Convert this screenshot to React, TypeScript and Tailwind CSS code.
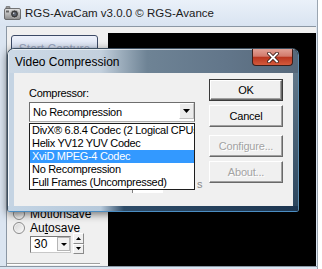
import clsx from 'clsx'

function CameraIcon() {
  return (
    <svg width="17" height="14" viewBox="0 0 17 14">
      <defs>
        <linearGradient id="cam" x1="0" y1="0" x2="0" y2="1">
          <stop offset="0" stopColor="#e4e4e4" />
          <stop offset="1" stopColor="#8c8c8c" />
        </linearGradient>
      </defs>
      <rect x="2" y="0.5" width="4" height="3" rx="0.5" fill="#9a9a9a" stroke="#5a5a5a" strokeWidth="0.6" />
      <rect x="0.5" y="2.5" width="16" height="11" rx="1.5" fill="url(#cam)" stroke="#555" strokeWidth="0.8" />
      <circle cx="10.5" cy="8" r="4" fill="#3a3a3a" stroke="#c8c8c8" strokeWidth="0.8" />
      <circle cx="10.5" cy="8" r="2.1" fill="#5c6370" />
      <circle cx="9.7" cy="7.2" r="0.7" fill="#e8e8e8" />
      <rect x="2" y="4.5" width="3" height="2" fill="#666" />
    </svg>
  )
}

function DownTri({ w = 7, h = 4 }: { w?: number; h?: number }) {
  return (
    <svg width={w} height={h} viewBox={`0 0 ${w} ${h}`}>
      <polygon points={`0,0 ${w},0 ${w / 2},${h}`} fill="#000" />
    </svg>
  )
}

function UpTri({ w = 5, h = 3 }: { w?: number; h?: number }) {
  return (
    <svg width={w} height={h} viewBox={`0 0 ${w} ${h}`}>
      <polygon points={`0,${h} ${w},${h} ${w / 2},0`} fill="#000" />
    </svg>
  )
}

function Radio() {
  return (
    <div className="w-[12px] h-[12px] rounded-full border border-[#8c8c8c] bg-[linear-gradient(135deg,#d4d4d4,#fbfbfb)] shadow-[inset_0_0_0_1px_#f4f4f4]" />
  )
}

function Btn({ label, def, disabled }: { label: string; def?: boolean; disabled?: boolean }) {
  const inner = (
    <div
      className={clsx(
        'flex flex-1 items-center justify-center bg-[#f0f0f0] border border-t-[#ffffff] border-l-[#ffffff] border-b-[#696969] border-r-[#696969] shadow-[inset_-1px_-1px_0_#a0a0a0] text-[11px] tracking-[-0.2px] leading-[13px]',
        disabled ? 'text-[#a3a3a3] [text-shadow:1px_1px_0_#ffffff]' : 'text-black'
      )}
    >
      {label}
    </div>
  )
  return (
    <div className={clsx('flex w-[74px] h-[22px]', def && 'border border-[#3a3a3a]')}>{inner}</div>
  )
}

// the first entry is wider than the list and gets clipped, as in the original
const codecs = [
  'DivX® 6.8.4 Codec (2 Logical CPUs)',
  'Helix YV12 YUV Codec',
  'XviD MPEG-4 Codec',
  'No Recompression',
  'Full Frames (Uncompressed)',
]

function LeftPanel() {
  return (
    <div className="w-[101px] h-full">
      <div className="flex flex-col w-[93px] h-[231px] border-b border-[#a0a0a0] shadow-[0_1px_0_#ffffff]">
        <div className="ml-[4px] mt-[2px] w-[87px] h-[25px] flex items-center justify-center pt-[3px] rounded-[3px] border border-[#3c4a66] bg-[linear-gradient(180deg,#edf1fa_0%,#dde5f5_45%,#c7d2ea_52%,#bccae7_100%)] text-[12px] text-[#9ba7c0]">
          Start Capture
        </div>
        <div className="mt-[147px] h-[14px] flex items-center pl-[6px]">
          <Radio />
          <span className="ml-[5px] text-[12px] leading-[14px]">Motionsave</span>
        </div>
        <div className="h-[14px] flex items-center pl-[6px]">
          <Radio />
          <span className="ml-[5px] text-[12px] leading-[14px]">
            Au<span className="underline underline-offset-[1px]">t</span>osave
          </span>
        </div>
        <div className="-mt-[2px] flex items-start pl-[23px]">
          <div className="mt-[3px] w-[41px] h-[17px] flex bg-white border border-[#7a7a7a] border-b-[#c8c8c8] border-r-[#c8c8c8]">
            <span className="flex-1 pl-[3px] text-[12px] leading-[15px]">30</span>
            <div className="w-[13px] h-[14px] flex items-center justify-center bg-[#f2f2f2] border border-[#b5b5b5]">
              <DownTri w={6} h={3} />
            </div>
          </div>
          <div className="ml-[2px] w-[11px] h-[21px] flex flex-col">
            <div className="flex-1 flex items-center justify-center bg-[#f0f0f0] border border-t-white border-l-white border-b-[#8a8a8a] border-r-[#8a8a8a]">
              <UpTri w={5} h={3} />
            </div>
            <div className="flex-1 flex items-center justify-center bg-[#f0f0f0] border border-t-white border-l-white border-b-[#8a8a8a] border-r-[#8a8a8a]">
              <DownTri w={5} h={3} />
            </div>
          </div>
        </div>
      </div>
    </div>
  )
}

function CloseX() {
  return (
    <svg width="12" height="11" viewBox="0 0 12 11">
      <path d="M2 1.5 L10 9.5 M10 1.5 L2 9.5" stroke="#3b1d18" strokeWidth="3.6" strokeLinecap="square" />
      <path d="M2 1.5 L10 9.5 M10 1.5 L2 9.5" stroke="#ffffff" strokeWidth="1.9" strokeLinecap="square" />
    </svg>
  )
}

function Dialog() {
  return (
    <div className="absolute left-[7px] top-[48px] w-[292px] h-[164px] flex flex-col overflow-hidden rounded-t-[7px] rounded-b-[3px] border border-[#3d4f60] border-r-[#5f8fb1] border-b-[#4b8dc2] shadow-[0_2px_8px_rgba(0,0,0,0.55)]">
      <div className="h-[24px] flex items-start justify-between bg-[linear-gradient(90deg,#ccd9e6_0%,#c3d0dd_32%,#9cadbc_39%,#6e8395_48%,#62768a_75%,#56687a_100%)] shadow-[inset_1px_1px_0_rgba(255,255,255,0.6)]">
        <span className="pl-[7px] pt-[6px] text-[12px] leading-[14px] text-black">Video Compression</span>
        <div className="mr-[5px] w-[41px] h-[17px] flex items-center justify-center rounded-b-[4px] border border-t-0 border-[#3d1f1a] bg-[linear-gradient(180deg,#e2a195_0%,#d27a6c_45%,#b9361f_52%,#d55a3c_100%)]">
          <CloseX />
        </div>
      </div>
      <div className="flex h-[133px]">
        <div className="w-[6px] bg-[#c5d4e3] border-l border-[#f4f8fc]" />
        <div className="flex w-[279px] bg-[#f0f0f0] text-[11px] tracking-[-0.3px] text-black">
          <div className="flex flex-col pl-[15px] pt-[14px]">
            <span className="leading-[13px]">Compressor:</span>
            <div className="mt-[2px] flex h-[20px] w-[166px] bg-white border border-[#6e6e6e] border-b-[#b0b0b0]">
              <span className="flex-1 pl-[3px] leading-[18px] whitespace-nowrap">No Recompression</span>
              <div className="w-[15px] h-[16px] flex items-center justify-center bg-[#ececec] border border-[#c2c2c2] border-t-white border-l-white">
                <DownTri />
              </div>
            </div>
            <div className="mt-[1px] w-[166px] h-[67px] flex flex-col bg-white border border-[#1e1e1e] overflow-hidden">
              {codecs.map((c, i) => (
                <div
                  key={c}
                  className={clsx(
                    'h-[13px] shrink-0 pl-[2px] leading-[13px] whitespace-nowrap',
                    i === 2 ? 'bg-[#3399ff] text-white' : 'text-black'
                  )}
                >
                  {c}
                </div>
              ))}
            </div>
            <div className="ml-[103px] w-[31px] h-[3px] bg-white border-l border-[#808080]" />
          </div>
          <div className="w-[14px] pl-[2px] pt-[105px] leading-[13px] text-[#8a8a8a]">s</div>
          <div className="flex flex-col pt-[6px]">
            <Btn label="OK" def />
            <div className="mt-[4px]">
              <Btn label="Cancel" />
            </div>
            <div className="mt-[8px]">
              <Btn label="Configure..." disabled />
            </div>
            <div className="mt-[4px]">
              <Btn label="About..." disabled />
            </div>
          </div>
        </div>
        <div className="w-[5px] bg-[linear-gradient(180deg,#62788a,#2c465e)]" />
      </div>
      <div className="h-[5px] bg-[linear-gradient(90deg,#c3d4e4_0%,#b6c9db_32%,#2e4c68_40%,#1c3550_100%)]" />
    </div>
  )
}

export default function App() {
  return (
    <div className="relative w-[322px] h-[269px] overflow-hidden bg-white font-['Liberation_Sans',Arial,sans-serif] text-black">
      <div className="flex flex-col w-[318px] h-[269px] bg-[#dbe5f1] border-r border-[#9aa5b1]">
        <div className="flex items-center h-[26px] pl-[4px] bg-[linear-gradient(180deg,#eaf1f9,#d9e4f1)]">
          <CameraIcon />
          <span className="ml-[4px] text-[11.5px] leading-[14px] text-[#1b1b1b]">RGS-AvaCam v3.0.0 © RGS-Avance</span>
        </div>
        <div className="ml-[6px] mr-[1px] h-[240px] flex flex-col bg-[#f0f0f0] border-t border-l border-[#8b97a4]">
          <div className="h-[6px] shrink-0" />
          <div className="flex flex-1">
            <LeftPanel />
            <div className="flex-1 bg-black" />
          </div>
        </div>
        <div className="h-[3px] border-t border-[#8b97a4]" />
      </div>
      <Dialog />
    </div>
  )
}
